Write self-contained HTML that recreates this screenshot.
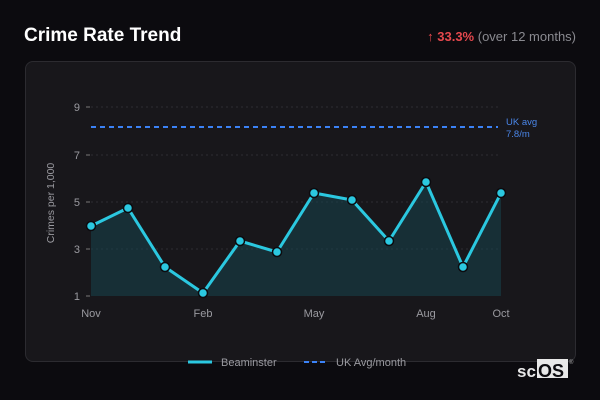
<!DOCTYPE html>
<html><head><style>
html,body{margin:0;padding:0;width:600px;height:400px;background:#0c0b0f;overflow:hidden;font-family:"Liberation Sans","DejaVu Sans",sans-serif}
.t{position:absolute;left:24px;top:25px;color:#fff;font-size:19px;font-weight:bold;font-family:"Liberation Sans",sans-serif}
.r{position:absolute;right:24px;top:29px;font-size:13px;color:#8a8a90;font-family:"Liberation Sans",sans-serif}
.r b{color:#e5484d}
.card{position:absolute;left:25px;top:61px;width:549px;height:299px;background:#18171b;border:1px solid #2c2b30;border-radius:8px}
svg{position:absolute;left:0;top:0}
</style></head><body>
<div class="t">Crime Rate Trend</div>
<div class="r"><b>↑ 33.3%</b> (over 12 months)</div>
<div class="card"></div>
<svg width="600" height="400" font-family="Liberation Sans,sans-serif">
<g stroke="#2e2d33" stroke-dasharray="2 3" stroke-width="1">
<line x1="91" x2="500" y1="107" y2="107"/><line x1="91" x2="500" y1="155" y2="155"/>
<line x1="91" x2="500" y1="202" y2="202"/><line x1="91" x2="500" y1="249" y2="249"/>
</g>
<g stroke="#777" stroke-width="1">
<line x1="86" x2="90" y1="107" y2="107"/><line x1="86" x2="90" y1="155" y2="155"/><line x1="86" x2="90" y1="202" y2="202"/><line x1="86" x2="90" y1="249" y2="249"/><line x1="86" x2="90" y1="296" y2="296"/>
</g>
<g fill="#9a9aa0" font-size="11" text-anchor="end">
<text x="80" y="111">9</text><text x="80" y="159">7</text><text x="80" y="206">5</text><text x="80" y="253">3</text><text x="80" y="300">1</text>
</g>
<text transform="translate(54,203) rotate(-90)" fill="#9a9aa0" font-size="10.5" text-anchor="middle">Crimes per 1,000</text>
<g fill="#9a9aa0" font-size="11" text-anchor="middle">
<text x="91" y="317">Nov</text><text x="203" y="317">Feb</text><text x="314" y="317">May</text><text x="426" y="317">Aug</text><text x="501" y="317">Oct</text>
</g>
<line x1="91" x2="498" y1="127" y2="127" stroke="#3b82f6" stroke-width="2" stroke-dasharray="5 4"/>
<text x="506" y="125" fill="#4a86e8" font-size="9.5">UK avg</text>
<text x="506" y="137" fill="#4a86e8" font-size="9.5">7.8/m</text>
<path d="M91,226 L128,208 L165,267 L203,293 L240,241 L277,252 L314,193 L352,200 L389,241 L426,182 L463,267 L501,193 L501,296 L91,296Z" fill="#18444d" fill-opacity="0.55"/>
<polyline points="91,226 128,208 165,267 203,293 240,241 277,252 314,193 352,200 389,241 426,182 463,267 501,193" fill="none" stroke="#2bc8e0" stroke-width="3" stroke-linejoin="round"/>
<g fill="#2bc8e0" stroke="#0c0b0f" stroke-width="1.5">
<circle cx="91" cy="226" r="4.5"/><circle cx="128" cy="208" r="4.5"/><circle cx="165" cy="267" r="4.5"/><circle cx="203" cy="293" r="4.5"/><circle cx="240" cy="241" r="4.5"/><circle cx="277" cy="252" r="4.5"/><circle cx="314" cy="193" r="4.5"/><circle cx="352" cy="200" r="4.5"/><circle cx="389" cy="241" r="4.5"/><circle cx="426" cy="182" r="4.5"/><circle cx="463" cy="267" r="4.5"/><circle cx="501" cy="193" r="4.5"/>
</g>
<line x1="188" x2="212" y1="362" y2="362" stroke="#2bc8e0" stroke-width="3"/>
<text x="221" y="366" fill="#9a9aa0" font-size="11">Beaminster</text>
<line x1="304" x2="328" y1="362" y2="362" stroke="#3b82f6" stroke-width="2" stroke-dasharray="5 3"/>
<text x="336" y="366" fill="#9a9aa0" font-size="11">UK Avg/month</text>
<rect x="537" y="359" width="31" height="19" fill="#e8e8e8"/>
<text x="517" y="377" fill="#e8e8e8" font-size="17" font-weight="bold">sc</text>
<text x="538" y="377" fill="#0c0b0f" font-size="18" font-weight="bold">OS</text>
<text x="569" y="364" fill="#aaa" font-size="6">®</text>
</svg>
</body></html>
